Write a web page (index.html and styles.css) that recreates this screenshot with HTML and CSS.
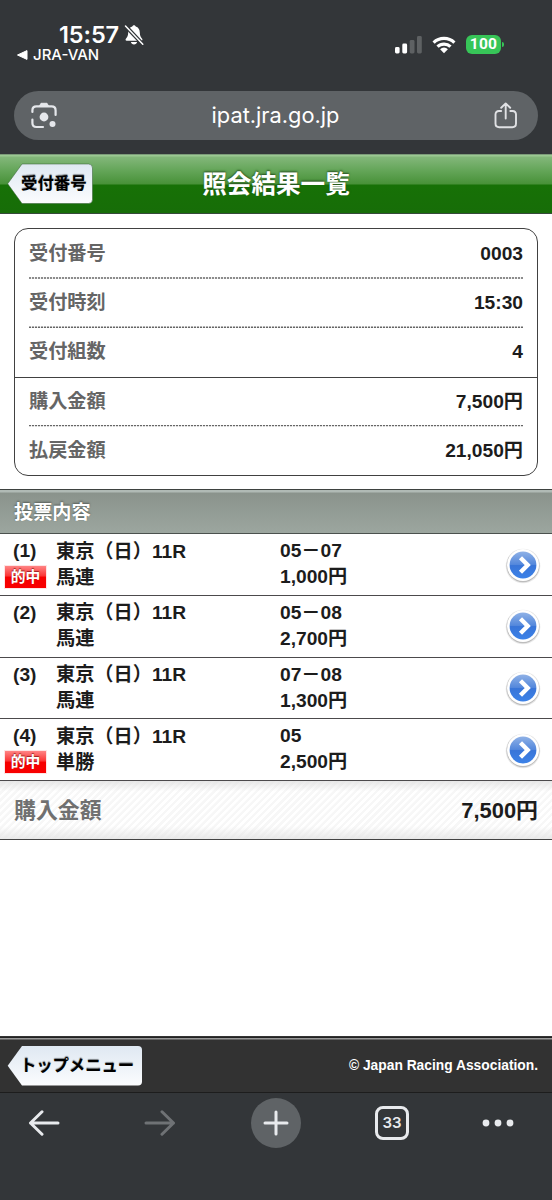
FILE: index.html
```html
<!DOCTYPE html>
<html lang="ja">
<head>
<meta charset="utf-8">
<title>照会結果一覧</title>
<link rel="stylesheet" href="styles.css">
</head>
<body>
<div class="chrome-top">
  <div class="status">
    <div class="status-left">
      <div class="clock"><span class="time">15:57</span>
        <svg class="bell" width="20" height="22" viewBox="0 0 20 22"><path d="M10 1.2c.9 0 1.500.6 1.700 1.400 2.700.8 4 3 4.100 5.900.1 3.400.9 4.800 2.300 6.200.7.8.4 2-.8 2H2.700c-1.200 0-1.500-1.200-.8-2 1.400-1.400 2.200-2.800 2.300-6.200.1-2.900 1.400-5.100 4.100-5.900.2-.8.8-1.400 1.700-1.400zM6.900 18h6.200c-.3 1.400-1.500 2.400-3.100 2.400S7.200 19.400 6.900 18z" fill="#fff"/><path d="M.8 1.200 18.500 20" stroke="#333639" stroke-width="4"/><path d="M1.500 2 18.800 20.200" stroke="#fff" stroke-width="1.500" stroke-linecap="round"/></svg>
      </div>
      <div class="back-app"><svg width="11" height="10" viewBox="0 0 11 10"><path d="M.5 5 10 .6v8.800z" fill="#fff" stroke="#fff" stroke-linejoin="round"/></svg><span class="app-name">JRA-VAN</span></div>
    </div>
    <div class="status-right">
      <svg width="27" height="18" viewBox="0 0 27 18"><rect y="11" width="4.600" height="6.500" rx="1.400" fill="#fff"/><rect x="7.300" y="7.500" width="4.800" height="10" rx="1.400" fill="#fff"/><rect x="14.700" y="4" width="4.800" height="13.500" rx="1.400" fill="#5e6163"/><rect x="22" width="4.800" height="17.500" rx="1.400" fill="#5e6163"/></svg>
      <svg class="wifi" width="24" height="18" viewBox="0 0 24 18"><g fill="none" stroke="#fff" stroke-width="3.200"><path d="M1.600 6.600a15 15 0 0 1 20.800 0"/><path d="M5.500 10.700a9.300 9.300 0 0 1 13 0"/></g><path d="M8.100 13.200a5.600 5.600 0 0 1 7.800 0L12 17.200z" fill="#fff"/></svg>
      <div class="battery">100</div><div class="battery-tip"></div>
    </div>
  </div>
  <div class="url-bar">
    <svg width="26" height="27" viewBox="0 0 26 27" fill="none" stroke="#e5e7eb" stroke-width="2.200" stroke-linecap="round"><path d="M1.400 10V8.400Q1.400 4.400 5.400 4.400H20.600Q24.600 4.400 24.600 8.400V13"/><path d="M1.400 17.500V21Q1.400 25 5.400 25H12"/><path d="M8.500 4 10 1.300H16L17.500 4z" fill="#e5e7eb" stroke-width="1"/><circle cx="13" cy="15" r="4.400" fill="#e5e7eb" stroke="none"/><circle cx="21.500" cy="22" r="3" fill="#e5e7eb" stroke="none"/></svg>
    <span class="url">ipat.jra.go.jp</span>
    <svg width="24" height="27" viewBox="0 0 24 27" fill="none" stroke="#e0e1e4" stroke-width="1.900" stroke-linecap="round" stroke-linejoin="round"><path d="M7.200 9H5Q1.500 9 1.500 12.500V21.500Q1.500 25.200 5.200 25.200H18.300Q22 25.200 22 21.500V12.500Q22 9 18.500 9H16.300M11.700 16.500V1.600M7.200 5.800 11.700 1.400 16.200 5.800"/></svg>
  </div>
</div>

<header class="page-head">
  <a class="tag tag-head"><svg class="tag-shape" width="86" height="42" viewBox="0 0 86 42"><defs><linearGradient id="tg" x1="0" y1="0" x2="0" y2="1"><stop offset="0" stop-color="#dfe8f2"/><stop offset="1" stop-color="#fbfcfe"/></linearGradient></defs><path d="M15 1H81.500Q85.500 1 85.500 5V36.500Q85.500 40.500 81.500 40.500H15L.7 20.800z" fill="url(#tg)" stroke="#335c33" stroke-opacity=".65" stroke-width=".8"/></svg><span class="tag-text">受付番号</span></a>
  <h1 class="title">照会結果一覧</h1>
</header>

<main class="content">
  <dl class="card">
    <div class="row"><dt>受付番号</dt><dd>0003</dd></div>
    <div class="row dotted"><dt>受付時刻</dt><dd>15:30</dd></div>
    <div class="row dotted"><dt>受付組数</dt><dd>4</dd></div>
    <div class="row solid"><dt>購入金額</dt><dd>7,500円</dd></div>
    <div class="row dotted"><dt>払戻金額</dt><dd>21,050円</dd></div>
  </dl>
  <h2 class="section">投票内容</h2>
  <svg class="defs" width="0" height="0"><defs><linearGradient id="blue" x1="0" y1="0" x2="0" y2="1"><stop offset="0" stop-color="#8fb1e6"/><stop offset=".48" stop-color="#5488dc"/><stop offset=".52" stop-color="#3975d8"/><stop offset="1" stop-color="#3c82e8"/></linearGradient>
  <symbol id="go" viewBox="0 0 38 40"><circle cx="19" cy="20" r="17.300" fill="#777" opacity=".16"/><circle cx="19" cy="19.700" r="16.500" fill="#888" opacity=".45"/><circle cx="19" cy="19" r="16" fill="#fff"/><circle cx="19" cy="19" r="13.400" fill="url(#blue)"/><path d="m16.500 11.800 7.200 7.200-7.200 7.200" fill="none" stroke="#fff" stroke-width="4.400"/></symbol></defs></svg>
  <ul class="bets">
    <li class="bet"><div class="num">(1)<span class="hit">的中</span></div><div class="race">東京（日）11R<br>馬連</div><div class="pick">05－07<br>1,000円</div><svg class="go"><use href="#go"/></svg></li>
    <li class="bet"><div class="num">(2)</div><div class="race">東京（日）11R<br>馬連</div><div class="pick">05－08<br>2,700円</div><svg class="go"><use href="#go"/></svg></li>
    <li class="bet"><div class="num">(3)</div><div class="race">東京（日）11R<br>馬連</div><div class="pick">07－08<br>1,300円</div><svg class="go"><use href="#go"/></svg></li>
    <li class="bet"><div class="num">(4)<span class="hit">的中</span></div><div class="race">東京（日）11R<br>単勝</div><div class="pick">05<br>2,500円</div><svg class="go"><use href="#go"/></svg></li>
  </ul>
  <div class="total"><span class="total-label">購入金額</span><span>7,500円</span></div>
</main>

<footer class="foot">
  <a class="tag tag-foot"><svg class="tag-shape" width="136" height="42" viewBox="0 0 136 42"><path d="M15 1H131Q135 1 135 5V36.500Q135 40.500 131 40.500H15L.7 20.800z" fill="url(#tg)"/></svg><span class="tag-text">トップメニュー</span></a>
  <span class="copy">© Japan Racing Association.</span>
</footer>

<nav class="toolbar">
  <svg width="32" height="26" viewBox="0 0 32 26" fill="none" stroke="#e8eaed" stroke-width="3" stroke-linecap="round" stroke-linejoin="round"><path d="M30 13H2.500M14 1.800 2.500 13 14 24.200"/></svg>
  <svg width="32" height="26" viewBox="0 0 32 26" fill="none" stroke="#6f7275" stroke-width="3" stroke-linecap="round" stroke-linejoin="round"><path d="M2 13H29.500M18 1.800 29.500 13 18 24.200"/></svg>
  <div class="plus"><svg width="26" height="26" viewBox="0 0 26 26" stroke="#e8eaed" stroke-width="3" stroke-linecap="round"><path d="M13 2v22M2 13h22"/></svg></div>
  <div class="tabs">33</div>
  <svg class="dots" width="32" height="8" viewBox="0 0 32 8" fill="#e8eaed"><circle cx="4" cy="4" r="3.400"/><circle cx="16" cy="4" r="3.400"/><circle cx="28" cy="4" r="3.400"/></svg>
</nav>
</body>
</html>
```
FILE: styles.css
```css
* { box-sizing: border-box; }
body {
  margin: 0; width: 552px; height: 1200px; overflow: hidden;
  display: flex; flex-direction: column; background: #fff; color: #1c1c1c;
  font: bold 19.2px/26px "Liberation Sans", "Noto Sans CJK JP", sans-serif;
}
svg { display: block; flex: none; }

.chrome-top { height: 154px; flex: none; background: #333639; color: #fff; }
.status { height: 91px; display: flex; justify-content: space-between; padding: 22px 48px 0 17px; }
.clock { display: flex; align-items: center; height: 25px; padding-left: 42px; }
.time { font: 600 23.5px/22px Inter, sans-serif; letter-spacing: -.1px; width: 65px; white-space: nowrap; }
.bell { margin-top: 1px; }
.back-app { display: flex; align-items: center; gap: 5px; height: 16px; }
.app-name { font: 500 15px/16px Inter, sans-serif; }
.status-right { display: flex; align-items: center; height: 45px; }
.status-right .wifi { margin: 0 10px; }
.battery { width: 35px; height: 19px; border-radius: 6px; background: #37c558; font: 700 15.5px/19px Roboto, sans-serif; letter-spacing: .2px; text-align: center; }
.battery-tip { width: 2px; height: 5px; margin-left: 1px; border-radius: 0 2px 2px 0; background: #37c558; }
.url-bar { height: 49px; margin: 0 14px; padding: 0 20px 0 17px; border-radius: 25px; background: #5f6366; display: flex; align-items: center; justify-content: space-between; }
.url { font: 400 21.800px/26px Inter, sans-serif; margin-top: -2px; }

.page-head {
  height: 60px; flex: none; padding: 9px 7px 0; display: grid; grid-template-columns: 86px 1fr 86px;
  border-top: 1px solid #7b9b78; border-bottom: 1px solid #36493a;
  background: linear-gradient(#9bc892 0 1px, #83b77a 2px, #65a65a 15px, #489138 29px, #177106 30px, #176d08 58px);
}
.tag { position: relative; height: 41px; }
.tag-shape { position: absolute; left: 0; top: -1px; }
.tag-text { position: relative; display: block; padding-left: 14px; color: #000; font-size: 16.4px; line-height: 39px; white-space: nowrap; text-shadow: 0 -1px 1px #7a8086; }
.tag-foot .tag-text { padding-left: 13px; letter-spacing: -.1px; }
.title { margin: 0; text-align: center; color: #fff; font-size: 24.6px; line-height: 41px; text-shadow: 0 -1px 2px #234d1d; }

.content { flex: none; height: 822px; }
.card { margin: 14px 14px 13px; height: 248px; border: 1.500px solid #414141; border-radius: 14px; display: grid; grid-template-rows: repeat(5, 1fr); }
.row { position: relative; display: flex; justify-content: space-between; align-items: center; padding: 1px 14px 0; }
.row dt { color: #656565; }
.row dd { margin: 0; }
.row.dotted::before { content: ""; position: absolute; left: 14px; right: 14px; top: -1px; height: 2px; background: repeating-linear-gradient(90deg, #666 0 2px, #eee 2px 3px); clip-path: inset(0 0 .5px); }
.row.solid { border-top: 1px solid #414141; padding-top: 0; }
.section { margin: 0; height: 45px; padding: 0 14px; color: #fff; font-size: 19.2px; line-height: 45px; border-top: 1px solid #3e4240; border-bottom: 1px solid #4b514e; background: linear-gradient(#b0bab5 0 2px, #8a938c 3px, #9ca69f); text-shadow: 0 -1px 2px #555d58; }
.defs { position: absolute; }
.bets { margin: 0; padding: 0; list-style: none; height: 247px; display: grid; grid-template-rows: repeat(4, 1fr); }
.bet { display: grid; grid-template-columns: 56px 224px 224px 38px; padding-top: 4px; border-bottom: 1.500px solid #4c4a4c; }
.num { padding-left: 13px; }
.hit { display: block; width: 43px; height: 24px; margin: 1px 0 0 -9px; padding-top: 1px; color: #fff; font-size: 14.8px; line-height: 20px; text-align: center; border: 1px solid #ffe4e4; background: linear-gradient(#ff8484, #fb3434 46%, #f60000 50%, #f80000); text-shadow: 0 -1px 1px #922; }
.race { padding-top: .5px; }
.go { width: 38px; height: 40px; margin-top: 7.500px; }
.total { height: 59px; padding: 2px 14px 0; display: flex; align-items: center; justify-content: space-between; font-size: 21.9px; border-bottom: 1.500px solid #444;
  background: linear-gradient(#e2e2e2cc, #fff0 18%, #fff0 78%, #e4e4e4cc), repeating-linear-gradient(135deg, #fff 0 2.200px, #f7f7f7 2.800px 5px); }
.total-label { color: #707070; }

.foot { height: 57px; flex: none; padding: 7px 14px 0 7px; display: flex; justify-content: space-between; border-top: 1px solid #333; border-bottom: 1px solid #1d1d1d; background: linear-gradient(#222 0 1px, #999 1px 2px, #323232 3px); color: #fff; }
.tag-foot { margin-top: 2px; }
.copy { font-size: 13.8px; line-height: 43px; }
.toolbar { flex: 1; background: #333639; display: grid; grid-template-columns: 87px 146px 86px 146px 66px; justify-items: center; align-items: start; padding-top: 5px; }
.toolbar > svg { margin-top: 12px; }
.plus { width: 50px; height: 50px; border-radius: 50%; background: #5f6366; display: grid; place-items: center; }
.tabs { width: 34px; height: 34px; margin-top: 8px; border: 3px solid #e8eaed; border-radius: 8px; color: #e8eaed; font: 600 15px/28px Inter, sans-serif; text-align: center; }
.toolbar > .dots { margin-top: 21px; }
```
